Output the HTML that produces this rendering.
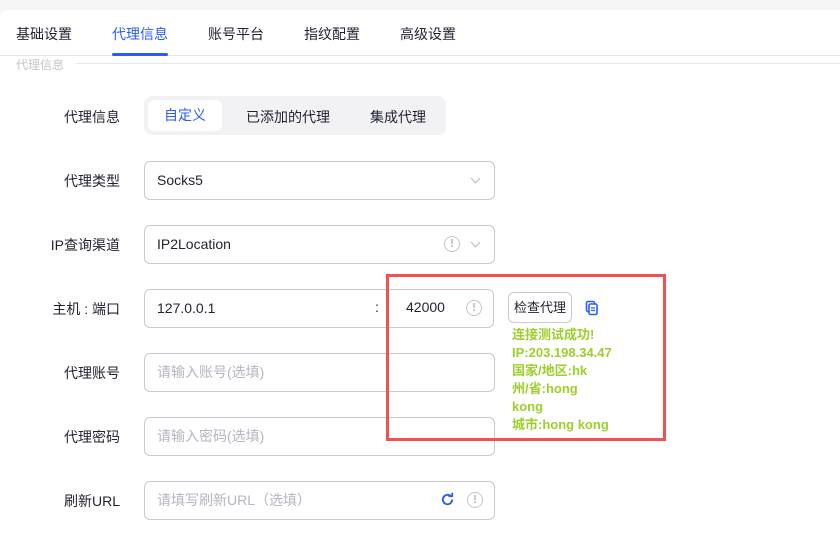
<!DOCTYPE html>
<html><head><meta charset="utf-8"><style>
*{box-sizing:border-box;margin:0;padding:0}
body{width:840px;height:544px;overflow:hidden;background:#f5f5f6;font-family:"Liberation Sans","Noto Sans CJK SC",sans-serif;position:relative}
.card{position:absolute;left:0;top:10px;width:840px;height:540px;background:#fff;border-radius:8px 0 0 0}
.t{position:absolute;font-size:14px;color:#1f2130;top:24px}
.a{position:absolute;}
.tabline{position:absolute;left:0;width:840px;height:1px;background:#e3e4e8}
.lbl{position:absolute;font-size:14px;color:#1f2130;width:120px;text-align:right;left:0}
.in{position:absolute;left:144px;width:351px;height:39px;border:1px solid #c9cad2;border-radius:6px;font-size:14px;color:#1f2130;padding:0 12px;line-height:37px}
.ph{color:#b4b6c0}
.ex{position:absolute;width:16px;height:16px;border:1.6px solid #c4c5cc;border-radius:50%;color:#c4c5cc;font-size:11px;font-weight:bold;text-align:center;line-height:13px;font-family:"DejaVu Sans",sans-serif}
.chev{position:absolute;width:7px;height:7px;border-right:1.3px solid #b8b9c2;border-bottom:1.3px solid #b8b9c2;transform:rotate(45deg)}
.g{position:absolute;left:512px;font-size:13px;font-weight:bold;color:#9ccf2a;line-height:18px;top:326px}
</style></head><body>
<div class="card">
<div class="t" style="left:16px;top:14px">基础设置</div>
<div class="t" style="left:112px;top:14px;color:#2b5cf6">代理信息</div>
<div class="t" style="left:208px;top:14px">账号平台</div>
<div class="t" style="left:304px;top:14px">指纹配置</div>
<div class="t" style="left:400px;top:14px">高级设置</div>
<div class="tabline" style="top:45px"></div>
<div class="a" style="left:112px;top:43px;width:56px;height:3px;background:#2b5cf6;border-radius:2px"></div>
<div class="a" style="left:16px;top:46px;font-size:12px;color:#c4c5cc">代理信息</div>
<div class="a" style="left:76px;top:53px;width:764px;height:1px;background:#e6e7ea"></div>
</div>

<div class="lbl" style="top:107px">代理信息</div>
<div class="a" style="left:144px;top:96px;width:302px;height:39px;background:#f2f2f4;border-radius:8px"></div>
<div class="a" style="left:148px;top:100px;width:74px;height:31px;background:#fff;border-radius:6px;font-size:14px;color:#2b5cf6;text-align:center;line-height:31px">自定义</div>
<div class="a" style="left:246px;top:107px;font-size:14px;color:#1f2130">已添加的代理</div>
<div class="a" style="left:370px;top:107px;font-size:14px;color:#1f2130">集成代理</div>

<div class="lbl" style="top:171px">代理类型</div>
<div class="in" style="top:161px">Socks5</div>
<div class="chev" style="left:472px;top:175px"></div>

<div class="lbl" style="top:235px">IP查询渠道</div>
<div class="in" style="top:225px">IP2Location</div>
<div class="ex" style="left:444px;top:236px">!</div>
<div class="chev" style="left:472px;top:239px"></div>

<div class="lbl" style="top:299px">主机 : 端口</div>
<div class="in" style="top:289px;width:350px">127.0.0.1</div>
<div class="a" style="left:375px;top:299px;font-size:14px;color:#1f2130">:</div>
<div class="a" style="left:406px;top:299px;font-size:14px;color:#1f2130">42000</div>
<div class="ex" style="left:466px;top:300px">!</div>

<div class="a" style="left:508px;top:292px;width:64px;height:31px;border:1px solid #c9cad2;border-radius:6px;font-size:13px;color:#1f2130;text-align:center;line-height:29px">检查代理</div>
<svg class="a" style="left:585px;top:300px" width="14" height="16" viewBox="0 0 14 16"><rect x="1.5" y="1.5" width="8" height="10" rx="1.5" fill="none" stroke="#2b5cf6" stroke-width="1.6"/><rect x="4" y="4" width="8" height="10.5" rx="1.5" fill="#fff" stroke="#2b5cf6" stroke-width="1.6"/><path d="M6 8h4M6 10.5h4" stroke="#2b5cf6" stroke-width="1.2"/></svg>
<div class="g">连接测试成功!<br>IP:203.198.34.47<br>国家/地区:hk<br>州/省:hong<br>kong<br>城市:hong kong</div>

<div class="lbl" style="top:363px">代理账号</div>
<div class="in ph" style="top:353px">请输入账号(选填)</div>

<div class="lbl" style="top:427px">代理密码</div>
<div class="in ph" style="top:417px">请输入密码(选填)</div>

<div class="lbl" style="top:491px">刷新URL</div>
<div class="in ph" style="top:481px">请填写刷新URL（选填）</div>
<svg class="a" style="left:440px;top:492px" width="15" height="15" viewBox="0 0 16 16"><path d="M13 8A5 5 0 1 1 11.5 4.5" fill="none" stroke="#2b5cf6" stroke-width="2"/><path d="M9 4.5h4V0.8" fill="none" stroke="#2b5cf6" stroke-width="2"/></svg>
<div class="ex" style="left:467px;top:492px">!</div>

<div class="a" style="left:386px;top:274px;width:280px;height:167px;border:3px solid #f05252"></div>
</body></html>
